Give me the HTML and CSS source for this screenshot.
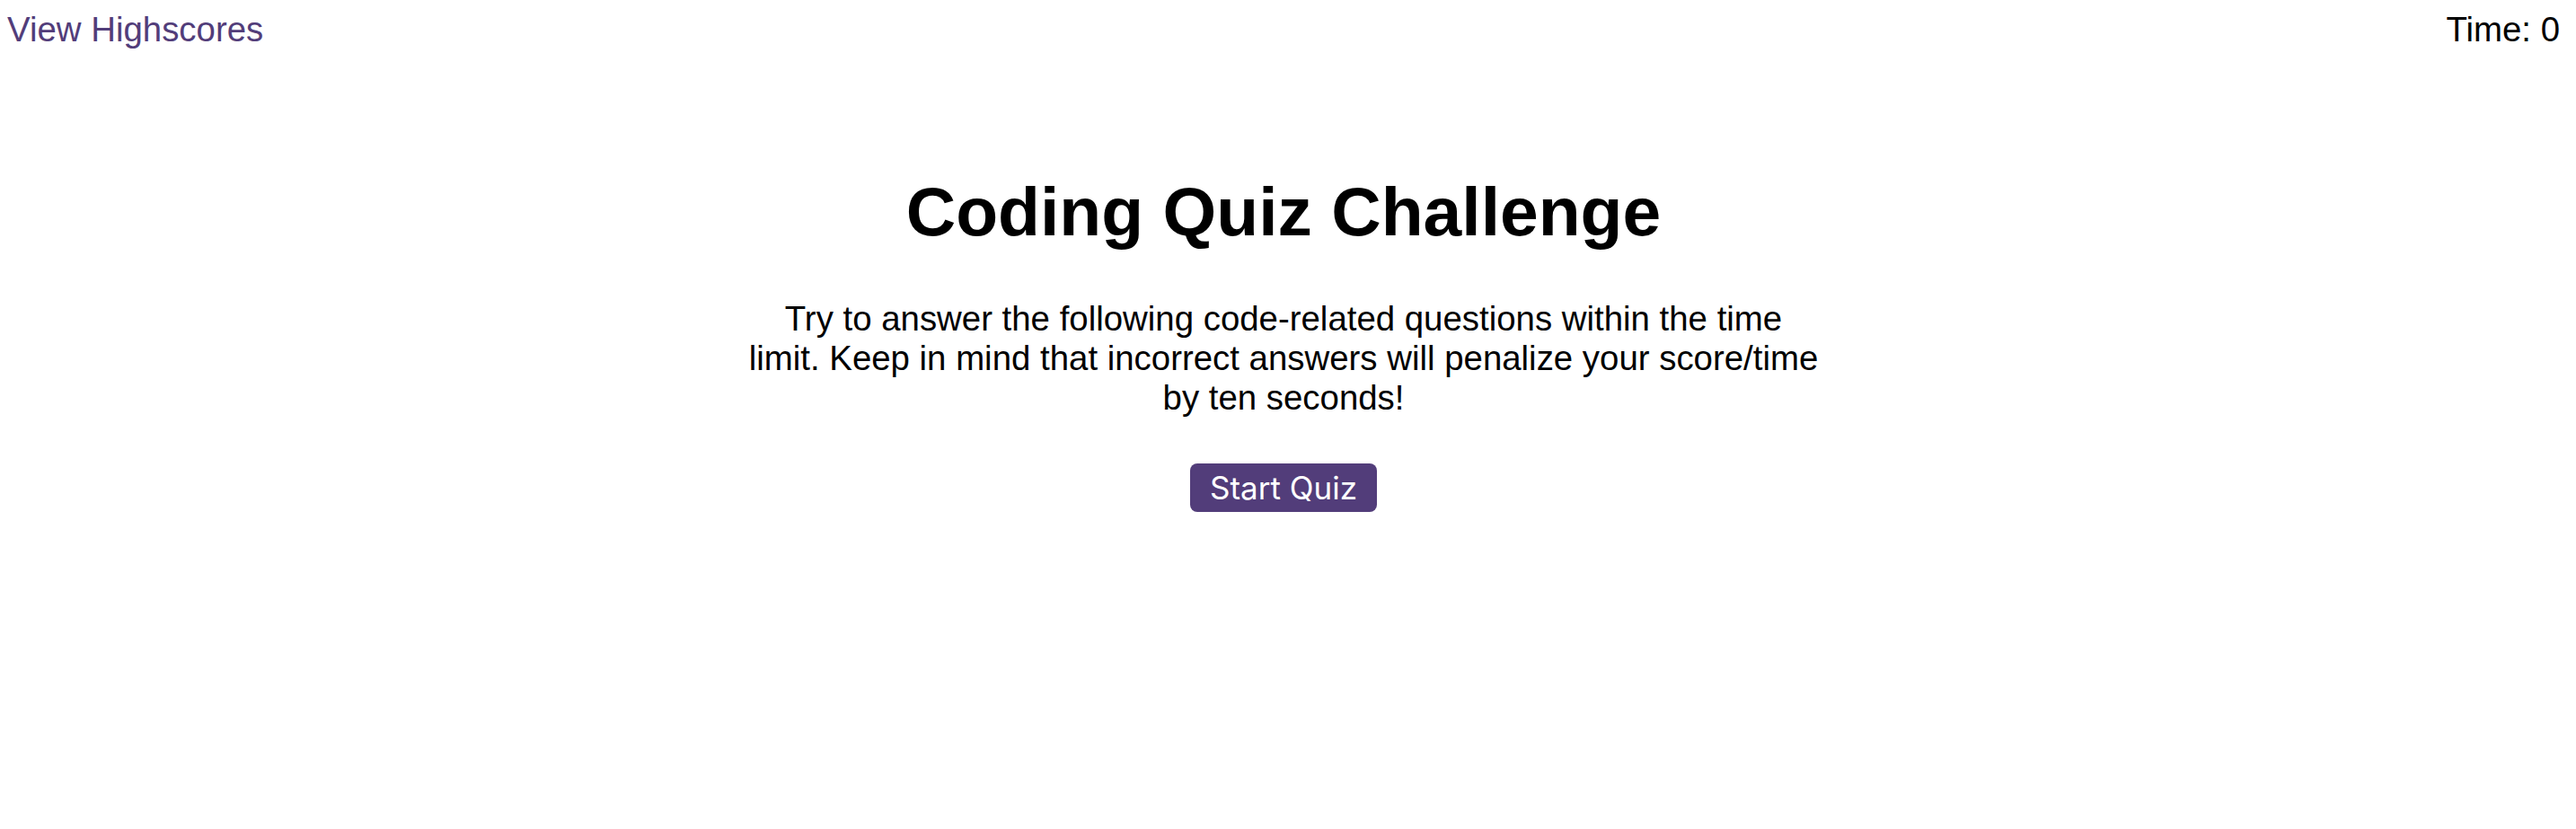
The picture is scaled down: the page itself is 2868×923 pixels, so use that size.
FILE: index.html
```html
<!DOCTYPE html>
<html lang="en">
<head>
<meta charset="utf-8">
<title>Coding Quiz Challenge</title>
<link rel="stylesheet" href="styles.css">
</head>
<body>
<header class="topbar">
  <a class="highscores" href="#">View Highscores</a>
  <span class="timer">Time: 0</span>
</header>
<main class="intro">
  <h1 class="intro-title">Coding Quiz Challenge</h1>
  <p class="intro-text">Try to answer the following code-related questions within the time limit. Keep in mind that incorrect answers will penalize your score/time by ten seconds!</p>
  <button class="start-btn" type="button">Start Quiz</button>
</main>
</body>
</html>
```
FILE: styles.css
```css
html, body {
  margin: 0;
  padding: 0;
  background: #ffffff;
}

body {
  font-family: "Liberation Sans", Arial, sans-serif;
  font-size: 38.4px;
  color: #000000;
  padding-right: 10px;
}

.topbar {
  display: flex;
  justify-content: space-between;
  align-items: baseline;
  padding: 11px 8px 0 8px;
  line-height: normal;
}

.highscores {
  color: #523d7a;
  text-decoration: none;
}

.timer {
  color: #000000;
}

.intro {
  display: flex;
  flex-direction: column;
  align-items: center;
  text-align: center;
  padding-top: 136px;
}

.intro-title {
  margin: 0;
  font-size: 76.8px;
  font-weight: bold;
  line-height: normal;
}

.intro-text {
  width: 1195px;
  margin: 53px 0 0 0;
  line-height: normal;
}

.start-btn {
  margin-top: 51px;
  height: 54px;
  padding: 0 22px;
  border: none;
  border-radius: 8px;
  background: #523d7a;
  color: #ffffff;
  font-family: Inter, "Noto Sans", sans-serif;
  font-size: 35px;
  line-height: 1;
  cursor: pointer;
}
```
